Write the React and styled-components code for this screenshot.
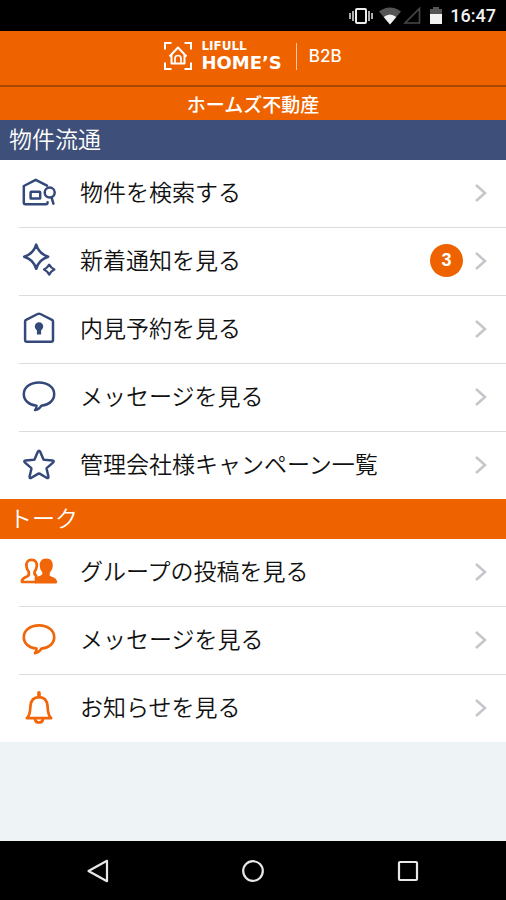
import styled, { createGlobalStyle, css } from "styled-components";

const GlobalStyle = createGlobalStyle`
  * {
    box-sizing: border-box;
  }
  body {
    margin: 0;
    background-color: #eef4f5;
    color: #111;
    font-family: "Noto Sans CJK JP", sans-serif;
  }
`;

const Screen = styled.div`
  display: flex;
  flex-direction: column;
  min-height: 100vh;
`;

const StatusBar = styled.div`
  display: flex;
  align-items: center;
  justify-content: flex-end;
  height: 31px;
  padding-right: 10px;
  background-color: #000;
`;
const StatusIcon = styled.svg`
  display: block;
  height: 20px;
  margin-right: ${({ $gap }) => $gap || 4}px;
`;
const Clock = styled.time`
  color: #f2f2f2;
  font: 500 18px/20px Roboto, sans-serif;
`;

const Header = styled.header`
  display: flex;
  align-items: center;
  justify-content: center;
  height: 56px;
  padding-bottom: 4px;
  background-color: #ee6200;
  border-bottom: 2px solid #a84700;
  color: white;
  font-family: "DejaVu Sans", sans-serif;
`;
const LogoMark = styled.svg`
  display: block;
  width: 28px;
  height: 28px;
  margin-right: 9px;
`;
const LogoText = styled.div`
  display: flex;
  flex-direction: column;
`;
const LogoSmall = styled.span`
  font-size: 12px;
  font-weight: 700;
  line-height: 14px;
`;
const LogoLarge = styled.span`
  font-size: 18px;
  font-weight: 700;
  line-height: 20px;
`;
const LogoSuffix = styled.span`
  margin-left: 14px;
  padding-left: 12px;
  border-left: 1px solid #f9c9a5;
  font-family: Inter, sans-serif;
  font-size: 17px;
  font-weight: 500;
  line-height: 27px;
`;

const CompanyName = styled.h1`
  margin: 0;
  background-color: #ee6200;
  color: white;
  font-size: 19px;
  font-weight: 500;
  line-height: 33px;
  text-align: center;
`;

const SectionTitle = styled.h2`
  margin: 0;
  padding: 0 9px 3px;
  background-color: ${({ $color }) => $color};
  color: white;
  font-size: 23px;
  font-weight: 350;
  line-height: 37px;
`;
const Menu = styled.ul`
  margin: 0;
  padding: 0;
  list-style: none;
  background-color: white;
`;
const MenuItem = styled.li`
  padding-left: 19px;
  & + & > a {
    min-height: 68px;
    border-top: 1px solid #dcdce0;
  }
`;
const MenuLink = styled.a`
  display: flex;
  align-items: center;
  min-height: 67px;
  padding: 0 18px 2px 0;
  color: #111;
  text-decoration: none;
`;
const MenuLabel = styled.span`
  flex: 1;
  margin-left: 21px;
  padding-bottom: 4px;
  font-size: 23px;
  font-weight: 350;
  line-height: 32px;
`;
const Badge = styled.span`
  width: 33px;
  height: 33px;
  margin-right: 11px;
  border-radius: 50%;
  background-color: #ee6200;
  color: white;
  font: 700 18px/33px "Liberation Sans", sans-serif;
  text-align: center;
`;
const MenuIcon = styled.svg`
  display: block;
  width: 40px;
  height: 40px;
  fill: none;
  stroke-linecap: round;
  stroke-linejoin: round;
  ${({ $talk }) =>
    $talk
      ? css`
          color: #f2660a;
          stroke: currentColor;
          stroke-width: 2.7;
        `
      : css`
          color: #34497a;
          stroke: currentColor;
          stroke-width: 2.5;
        `}
`;
const Chevron = styled.svg`
  display: block;
  width: 14px;
  height: 20px;
  fill: none;
  stroke: #c5c5ca;
  stroke-width: 2.5;
`;

const NavBar = styled.nav`
  display: grid;
  grid-template-columns: repeat(3, 1fr);
  height: 59px;
  margin-top: auto;
  padding: 0 21px;
  background-color: #000;
`;
const NavButton = styled.button`
  display: flex;
  align-items: center;
  justify-content: center;
  padding: 0;
  border: none;
  background: none;
  svg {
    width: 26px;
    height: 26px;
    fill: none;
    stroke: #e8e8e8;
    stroke-width: 2.2;
    stroke-linejoin: round;
  }
`;

const icons = {
  search: (
    <>
      <path d="M28 12.6 16.7 6.8 4.8 13v16.6q0 1.6 1.6 1.6h20.4q1.800 0 1.800-2" />
      <rect x="11.600" y="18.800" width="9.600" height="6.800" rx=".6" />
      <circle cx="30.700" cy="19.600" r="5" />
      <path d="m32.600 24.600 1.800 6" />
    </>
  ),
  sparkle: (
    <>
      <path d="M17.200 3.600c1.800 6.400 5 9.900 12 12.100-7 2.100-10.200 5.600-12 12.100-1.800-6.500-5-10-12-12.100 7-2.200 10.200-5.700 12-12.100Z" />
      <path d="M30.200 23.600q1.900 3.400 5.200 5-3.300 1.600-5.200 5-1.900-3.400-5.200-5 3.300-1.600 5.200-5Z" strokeWidth="2.200" />
    </>
  ),
  house: (
    <>
      <path d="M6.100 12.400q0-1 1-1.500L18.600 5q1.400-.7 2.800 0L33 10.900q1 .5 1 1.500v18.600q0 1.800-1.800 1.800H7.900q-1.800 0-1.800-1.800Z" />
      <circle cx="20" cy="17.500" r="4.200" fill="currentColor" stroke="none" />
      <path d="M20 19v6.500" strokeWidth="4.200" strokeLinecap="butt" />
    </>
  ),
  bubble: (
    <path d="M20 5.400c8.800 0 15.200 5 15.200 11.600 0 6.500-5.200 11-12.800 11.700-1.400 2.500-3.500 4.100-6.400 4.400 1.400-1.300 1.700-2.700 1.500-4.400C9.900 28 4.800 23.500 4.800 17 4.800 10.400 11.200 5.400 20 5.400Z" />
  ),
  star: (
    <path d="M18.700 6.900q1.300-2.200 2.600 0l3.100 7.400q.2.500.8.500l8.100.6q2.400.4.700 2.200l-6.100 5.300q-.4.400-.3.900l1.800 7.700q.2 2.200-1.800 1.300l-7-4.200q-.6-.3-1.200 0l-7 4.200q-2 .9-1.800-1.300l1.800-7.700q.1-.5-.3-.9L6 17.600q-1.700-1.800.7-2.200l8.100-.6q.6 0 .8-.5Z" />
  ),
  group: (
    <>
      <path d="M12.600 7.900c4 0 5.600 2.800 5.100 6.600-.3 2.200-.9 3.600-2 4.800-.6 2-.3 3.400 1.300 4V30H3.800q-1.200 0-.8-1.300c.8-2.800 2.700-3.400 5.100-4.200 2-.7 2.100-3 1.500-5.100-1.200-1.200-1.800-2.700-2.100-4.900-.5-3.900 1.100-6.600 5.100-6.600Z" />
      <path
        fill="currentColor"
        stroke="none"
        d="M27.300 6.500c-4.800 0-7.100 3.400-6.500 8 .3 2.400 1 4 2.300 5.200.5 1.800.3 3-1 3.600-2.200.9-4.600 1.500-6.100 3.200v4.900h20.700q1.700 0 1.500-1.600c-.7-3.500-3-4.400-6-5.400-2.100-.7-1.700-2.900-.9-4.700 1.400-1.300 2.100-2.800 2.400-5.200.6-4.600-1.600-8-6.400-8Z"
      />
    </>
  ),
  bell: (
    <>
      <path d="M7.800 30.200c3.500-3.200 3.200-6.800 3.600-11.900.5-6 3.800-9.200 8.600-9.200s8.100 3.200 8.600 9.200c.4 5.100.1 8.700 3.600 11.900Z" />
      <path d="M20 4.800v4" strokeWidth="3.600" />
      <path d="M16.100 31.500c.5 4 7.300 4 7.800 0" />
    </>
  ),
};

const sections = [
  {
    id: "property",
    title: "物件流通",
    color: "#3e4f79",
    items: [
      { label: "物件を検索する", icon: "search" },
      { label: "新着通知を見る", icon: "sparkle", count: 3 },
      { label: "内見予約を見る", icon: "house" },
      { label: "メッセージを見る", icon: "bubble" },
      { label: "管理会社様キャンペーン一覧", icon: "star" },
    ],
  },
  {
    id: "talk",
    title: "トーク",
    color: "#ee6200",
    items: [
      { label: "グループの投稿を見る", icon: "group" },
      { label: "メッセージを見る", icon: "bubble" },
      { label: "お知らせを見る", icon: "bell" },
    ],
  },
];

function Status() {
  return (
    <StatusBar>
      <StatusIcon width="24" viewBox="0 0 24 20" $gap={6}>
        <rect x="7" y="3" width="10" height="14" rx="1" fill="none" stroke="#eee" strokeWidth="2" />
        <path d="M4 5v10M20 5v10M1 7v6M23 7v6" stroke="#ccc" strokeWidth="1.7" />
      </StatusIcon>
      <StatusIcon width="22" viewBox="0 0 22 20" $gap={2}>
        <path d="M0 5.5Q11-2.5 22 5.5L11 18.5Z" fill="#555" />
        <path d="M4.7 11Q11 6 17.3 11L11 18.5Z" fill="#f2f2f2" />
      </StatusIcon>
      <StatusIcon width="18" viewBox="0 0 18 20" $gap={9}>
        <path d="M2 17 16.5 2.5V17Z" fill="none" stroke="#484848" strokeWidth="1.6" />
      </StatusIcon>
      <StatusIcon width="12" viewBox="0 0 12 20" $gap={8}>
        <path d="M0 3h3V1h6v2h3v5H0Z" fill="#555" />
        <path d="M0 8h12v10H0Z" fill="#f2f2f2" />
      </StatusIcon>
      <Clock>16:47</Clock>
    </StatusBar>
  );
}

function Logo() {
  return (
    <Header>
      <LogoMark viewBox="0 0 28 28" fill="none" stroke="white" strokeWidth="2">
        <path d="M1 7.5V1h6.5M20.5 1H27v6.500M27 20.500V27h-6.500M7.500 27H1v-6.500" />
        <path d="m5.500 14.500 8.500-9 8.500 9M7.500 13v8.500h13V13" strokeLinejoin="round" />
        <path d="M11 21v-4.500a3 3 0 0 1 6 0V21" strokeWidth="1.7" />
      </LogoMark>
      <LogoText>
        <LogoSmall>LIFULL</LogoSmall>
        <LogoLarge>HOME’S</LogoLarge>
      </LogoText>
      <LogoSuffix>B2B</LogoSuffix>
    </Header>
  );
}

function Section({ section }) {
  return (
    <section>
      <SectionTitle $color={section.color}>{section.title}</SectionTitle>
      <Menu>
        {section.items.map((item) => (
          <MenuItem key={item.label}>
            <MenuLink href={`#${section.id}-${item.icon}`}>
              <MenuIcon viewBox="0 0 40 40" $talk={section.id === "talk"}>
                {icons[item.icon]}
              </MenuIcon>
              <MenuLabel>{item.label}</MenuLabel>
              {item.count && <Badge>{item.count}</Badge>}
              <Chevron viewBox="0 0 14 20">
                <path d="m2 2 9 8-9 8" />
              </Chevron>
            </MenuLink>
          </MenuItem>
        ))}
      </Menu>
    </section>
  );
}

function App() {
  return (
    <>
      <GlobalStyle />
      <Screen>
        <Status />
        <Logo />
        <main>
          <CompanyName>ホームズ不動産</CompanyName>
          {sections.map((section) => (
            <Section key={section.id} section={section} />
          ))}
        </main>
        <NavBar>
          <NavButton aria-label="戻る">
            <svg viewBox="0 0 26 26">
              <path d="M3.5 13 22 2.8v20.4Z" />
            </svg>
          </NavButton>
          <NavButton aria-label="ホーム">
            <svg viewBox="0 0 26 26">
              <circle cx="13" cy="13" r="9.8" />
            </svg>
          </NavButton>
          <NavButton aria-label="最近使ったアプリ">
            <svg viewBox="0 0 26 26">
              <rect x="4" y="4" width="18" height="18" rx="1" />
            </svg>
          </NavButton>
        </NavBar>
      </Screen>
    </>
  );
}

export default App;
